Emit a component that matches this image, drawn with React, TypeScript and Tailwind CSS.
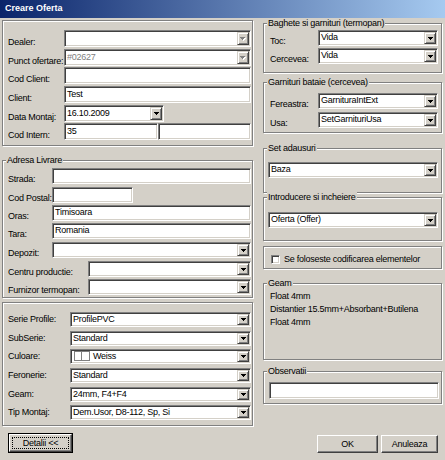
import React from "react";

const FONT = "font-['Liberation_Sans',Arial,sans-serif]";
const ETCHED = "border border-[#808080] shadow-[inset_1px_1px_0_#ffffff,1px_1px_0_#ffffff]";
const SUNKEN =
  "border border-t-[#808080] border-l-[#808080] border-b-white border-r-white shadow-[inset_1px_1px_0_#404040,inset_-1px_-1px_0_#d4d0c8] bg-white";
const RAISED =
  "border border-t-[#d4d0c8] border-l-[#d4d0c8] border-b-[#404040] border-r-[#404040] shadow-[inset_1px_1px_0_#ffffff,inset_-1px_-1px_0_#808080] bg-[#d4d0c8]";
const BTN =
  "border border-t-white border-l-white border-b-[#404040] border-r-[#404040] shadow-[inset_-1px_-1px_0_#808080] bg-[#d4d0c8]";

function Arrow({ disabled }: { disabled?: boolean }) {
  if (disabled) {
    return (
      <svg width="6" height="4" className="block">
        <rect x="1" y="1" width="5" height="1" fill="#ffffff" />
        <rect x="2" y="2" width="3" height="1" fill="#ffffff" />
        <rect x="3" y="3" width="1" height="1" fill="#ffffff" />
        <rect x="0" y="0" width="5" height="1" fill="#808080" />
        <rect x="1" y="1" width="3" height="1" fill="#808080" />
        <rect x="2" y="2" width="1" height="1" fill="#808080" />
      </svg>
    );
  }
  return (
    <svg width="5" height="3" className="block">
      <rect x="0" y="0" width="5" height="1" fill="#000000" />
      <rect x="1" y="1" width="3" height="1" fill="#000000" />
      <rect x="2" y="2" width="1" height="1" fill="#000000" />
    </svg>
  );
}

function Combo({
  children,
  disabled,
  grayText,
  cls = "flex-1",
}: {
  children?: React.ReactNode;
  disabled?: boolean;
  grayText?: boolean;
  cls?: string;
}) {
  return (
    <div className={`${SUNKEN} flex ${cls}`}>
      <div
        className={`flex-1 flex items-center pl-[2px] pb-[1px] leading-[11px] whitespace-nowrap overflow-hidden ${
          grayText ? "text-[#808080]" : "text-black"
        }`}
      >
        {children}
      </div>
      <div className={`${RAISED} w-[12px] m-[1px] flex items-center justify-center`}>
        <Arrow disabled={disabled} />
      </div>
    </div>
  );
}

function Field({ children, cls = "flex-1" }: { children?: React.ReactNode; cls?: string }) {
  return (
    <div
      className={`${SUNKEN} flex items-center pl-[2px] pb-[1px] leading-[11px] whitespace-nowrap overflow-hidden ${cls}`}
    >
      {children}
    </div>
  );
}

function Row({
  label,
  lw,
  center,
  cls,
  children,
}: {
  label: string;
  lw: string;
  center?: boolean;
  cls: string;
  children: React.ReactNode;
}) {
  return (
    <div className={`flex ${center ? "items-center" : "items-end"} ${cls}`}>
      <div className={`shrink-0 whitespace-nowrap ${center ? "leading-[11px]" : "leading-[9px]"} ${lw}`}>
        {label}
      </div>
      <div className="flex-1 flex self-stretch">{children}</div>
    </div>
  );
}

function Legend({ children }: { children: React.ReactNode }) {
  return (
    <span className="absolute -top-[6px] left-[3px] px-[1px] bg-[#d4d0c8] leading-[11px] whitespace-nowrap">
      {children}
    </span>
  );
}

function LeftColumn() {
  return (
    <div className="w-[251px] shrink-0 flex flex-col">
      <div className={`${ETCHED} h-[126px] pt-[9px] pl-[5px] pr-[1px] flex flex-col`}>
        <Row label="Dealer:" lw="w-[56px]" cls="h-[17px]">
          <Combo disabled />
        </Row>
        <Row label="Punct ofertare:" lw="w-[56px]" cls="h-[17px] mt-[2px]">
          <Combo disabled grayText>
            #02627
          </Combo>
        </Row>
        <Row label="Cod Client:" lw="w-[56px]" cls="h-[17px] mt-[1px]">
          <Field />
        </Row>
        <Row label="Client:" lw="w-[56px]" cls="h-[17px] mt-[2px]">
          <Field>Test</Field>
        </Row>
        <Row label="Data Montaj:" lw="w-[56px]" cls="h-[17px] mt-[2px]">
          <Combo cls="w-[100px]">16.10.2009</Combo>
        </Row>
        <Row label="Cod Intern:" lw="w-[56px]" cls="h-[17px] mt-[1px]">
          <Field cls="w-[94px]">35</Field>
          <Field cls="flex-1" />
        </Row>
      </div>

      <div className={`${ETCHED} relative mt-[14px] h-[138px] pt-[7px] pl-[5px] pr-[1px] flex flex-col`}>
        <Legend>Adresa Livrare</Legend>
        <Row label="Strada:" lw="w-[44px]" cls="h-[16px]">
          <Field />
        </Row>
        <Row label="Cod Postal:" lw="w-[44px]" cls="h-[16px] mt-[3px]">
          <Field cls="w-[81px]" />
        </Row>
        <Row label="Oras:" lw="w-[44px]" cls="h-[16px] mt-[2px]">
          <Field>Timisoara</Field>
        </Row>
        <Row label="Tara:" lw="w-[44px]" cls="h-[16px] mt-[2px]">
          <Field>Romania</Field>
        </Row>
        <Row label="Depozit:" lw="w-[44px]" cls="h-[16px] mt-[3px]">
          <Combo />
        </Row>
        <Row label="Centru productie:" lw="w-[80px]" cls="h-[16px] mt-[3px]">
          <Combo />
        </Row>
        <Row label="Furnizor termopan:" lw="w-[80px]" cls="h-[16px] mt-[2px]">
          <Combo />
        </Row>
      </div>

      <div className={`${ETCHED} mt-[4px] h-[124px] pt-[9px] pl-[5px] pr-[1px] flex flex-col`}>
        <Row label="Serie Profile:" lw="w-[62px]" center cls="h-[15px]">
          <Combo>ProfilePVC</Combo>
        </Row>
        <Row label="SubSerie:" lw="w-[62px]" center cls="h-[15px] mt-[4px]">
          <Combo>Standard</Combo>
        </Row>
        <Row label="Culoare:" lw="w-[62px]" center cls="h-[15px] mt-[3px]">
          <Combo>
            <span className="flex mr-[3px] ml-[1px]">
              <span className="w-[8px] h-[10px] border border-[#808080] bg-white" />
              <span className="w-[8px] h-[10px] border border-l-0 border-[#808080] bg-white" />
            </span>
            Weiss
          </Combo>
        </Row>
        <Row label="Feronerie:" lw="w-[62px]" center cls="h-[15px] mt-[4px]">
          <Combo>Standard</Combo>
        </Row>
        <Row label="Geam:" lw="w-[62px]" center cls="h-[15px] mt-[4px]">
          <Combo>24mm, F4+F4</Combo>
        </Row>
        <Row label="Tip Montaj:" lw="w-[62px]" center cls="h-[15px] mt-[3px]">
          <Combo>Dem.Usor, D8-112, Sp, Si</Combo>
        </Row>
      </div>
    </div>
  );
}

function RightColumn() {
  return (
    <div className="w-[179px] ml-[10px] shrink-0 flex flex-col">
      <div className={`${ETCHED} relative mt-[3px] h-[50px] pt-[6px] pl-[6px] pr-[3px] flex flex-col`}>
        <Legend>Baghete si garnituri (termopan)</Legend>
        <Row label="Toc:" lw="w-[48px]" cls="h-[16px]">
          <Combo>Vida</Combo>
        </Row>
        <Row label="Cercevea:" lw="w-[48px]" cls="h-[16px] mt-[2px]">
          <Combo>Vida</Combo>
        </Row>
      </div>

      <div className={`${ETCHED} relative mt-[9px] h-[51px] pt-[10px] pl-[6px] pr-[3px] flex flex-col`}>
        <Legend>Garnituri bataie (cercevea)</Legend>
        <Row label="Fereastra:" lw="w-[48px]" cls="h-[16px]">
          <Combo>GarnituraIntExt</Combo>
        </Row>
        <Row label="Usa:" lw="w-[48px]" cls="h-[16px] mt-[3px]">
          <Combo>SetGarnituriUsa</Combo>
        </Row>
      </div>

      <div className={`${ETCHED} relative mt-[15px] h-[45px] pt-[13px] pl-[4px] pr-[3px] flex flex-col`}>
        <Legend>Set adausuri</Legend>
        <div className="flex h-[16px]">
          <Combo>Baza</Combo>
        </div>
      </div>

      <div className={`${ETCHED} relative mt-[4px] h-[44px] pt-[14px] pl-[4px] pr-[3px] flex flex-col`}>
        <Legend>Introducere si incheiere</Legend>
        <div className="flex h-[16px]">
          <Combo>Oferta (Offer)</Combo>
        </div>
      </div>

      <div className={`${ETCHED} mt-[5px] h-[23px] pt-[8px] pl-[7px] flex flex-col`}>
        <div className="flex items-center h-[9px]">
          <span className="w-[9px] h-[9px] shrink-0 border border-t-[#808080] border-l-[#808080] border-b-white border-r-white shadow-[inset_1px_1px_0_#404040,inset_-1px_-1px_0_#d4d0c8] bg-white" />
          <span className="ml-[4px] leading-[11px] whitespace-nowrap">Se foloseste codificarea elementelor</span>
        </div>
      </div>

      <div className={`${ETCHED} relative mt-[14px] h-[77px] pt-[6px] pl-[6px] flex flex-col leading-[13px]`}>
        <Legend>Geam</Legend>
        <div>Float 4mm</div>
        <div className="whitespace-nowrap">Distantier 15.5mm+Absorbant+Butilena</div>
        <div>Float 4mm</div>
      </div>

      <div className={`${ETCHED} relative mt-[11px] h-[33px] pt-[10px] pl-[5px] pr-[2px] flex flex-col`}>
        <Legend>Observatii</Legend>
        <div className="flex h-[17px]">
          <Field />
        </div>
      </div>
    </div>
  );
}

export default function App() {
  return (
    <div
      className={`w-[445px] h-[460px] overflow-hidden bg-[#d4d0c8] text-black text-[9px] tracking-[-0.25px] ${FONT} flex flex-col`}
    >
      <div className="h-[18px] shrink-0 bg-[linear-gradient(to_right,#0a246a,#a6caf0)] flex items-center pl-[5px] text-white font-bold text-[9px] tracking-normal">
        Creare Oferta
      </div>
      <div className="flex pl-[2px] pt-[2px]">
        <LeftColumn />
        <RightColumn />
      </div>
      <div className="flex items-end pl-[8px] pr-[7px] mt-[7px]">
        <div className="w-[65px] h-[20px] border border-black flex">
          <div className={`${BTN} flex-1 flex p-[2px]`}>
            <div className="flex-1 border border-dotted border-black flex items-center justify-center leading-[11px]">
              Detalii &lt;&lt;
            </div>
          </div>
        </div>
        <div className={`${BTN} ml-auto w-[61px] h-[18px] flex items-center justify-center leading-[11px]`}>OK</div>
        <div className={`${BTN} ml-[3px] w-[57px] h-[18px] flex items-center justify-center leading-[11px]`}>
          Anuleaza
        </div>
      </div>
    </div>
  );
}
